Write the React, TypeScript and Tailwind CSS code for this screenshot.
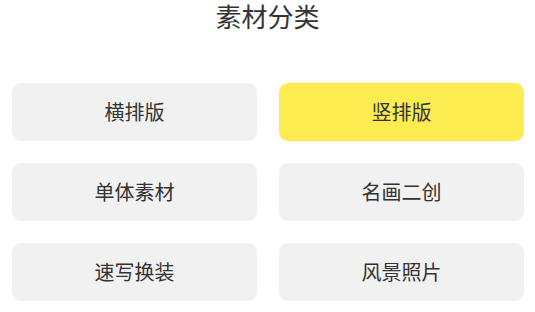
const categories = [
  { label: "横排版", active: false },
  { label: "竖排版", active: true },
  { label: "单体素材", active: false },
  { label: "名画二创", active: false },
  { label: "速写换装", active: false },
  { label: "风景照片", active: false },
];

export default function App() {
  return (
    <div
      className="w-[535px] h-[312px] bg-white overflow-hidden"
      style={{ fontFamily: '"Noto Sans CJK SC", "Noto Sans", sans-serif' }}
    >
      <h2 className="h-[32px] text-center text-[26px] leading-[32px] text-[#333333] font-normal">
        素材分类
      </h2>
      <div className="grid grid-cols-2 gap-x-[22px] gap-y-[22px] pl-3 pr-[11px] pt-[51px]">
        {categories.map((c) => (
          <div
            key={c.label}
            className={`h-[58px] rounded-[9px] flex items-center justify-center text-[20px] text-[#333333] ${
              c.active ? "bg-[#fdec4f]" : "bg-[#f1f1f1]"
            }`}
          >
            {c.label}
          </div>
        ))}
      </div>
    </div>
  );
}
